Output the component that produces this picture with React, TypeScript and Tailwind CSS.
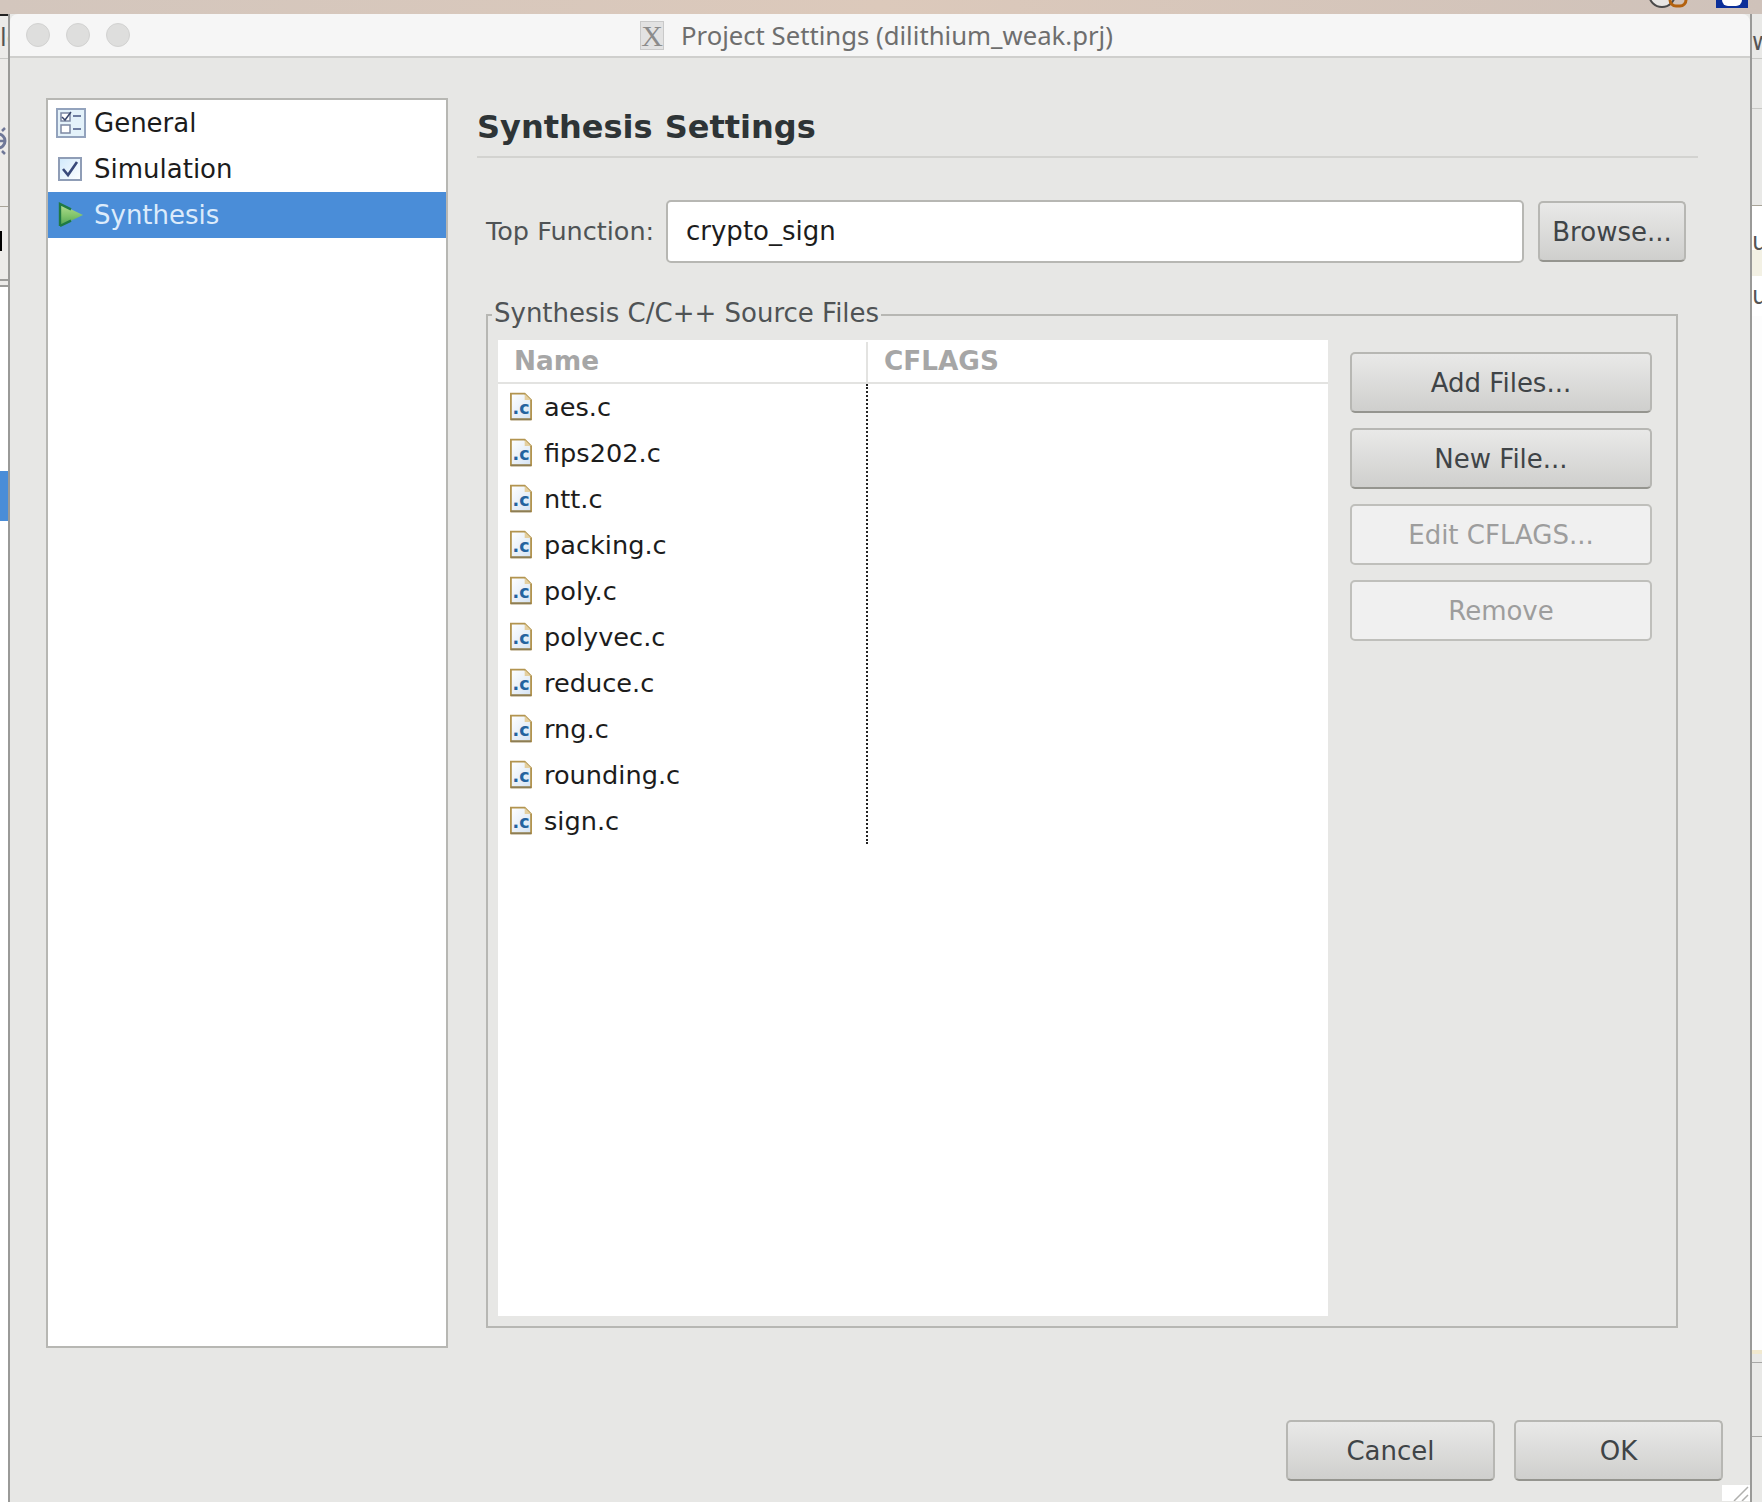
const files = ['aes.c', 'fips202.c', 'ntt.c', 'packing.c', 'poly.c', 'polyvec.c', 'reduce.c', 'rng.c', 'rounding.c', 'sign.c'];

const FileIcon = () => (
  <svg width="22" height="29" viewBox="0 0 24 30" className="shrink-0 mb-[2px]">
    <defs>
      <linearGradient id="fileFill" x1="0" y1="0" x2="1" y2="1">
        <stop offset="0" stopColor="#ffffff" />
        <stop offset="1" stopColor="#d5e3f3" />
      </linearGradient>
    </defs>
    <path d="M1 1 H16 L23 8 V29 H1 Z" fill="url(#fileFill)" stroke="#b2944f" strokeWidth="2" />
    <path d="M1 29 H23" stroke="#8c7d55" strokeWidth="2" />
    <path d="M16 1 V8 H23 Z" fill="#e4cf9f" />
    <text x="12" y="23" textAnchor="middle" fontSize="19" fontWeight="700" fontFamily="DejaVu Sans, sans-serif" fill="#24629f">.c</text>
  </svg>
);

const GeneralIcon = () => (
  <svg width="30" height="30" viewBox="0 0 30 30" className="shrink-0">
    <rect x="1" y="1" width="28" height="28" fill="#e4f2fa" stroke="#93a3bd" strokeWidth="2" />
    <rect x="5" y="5" width="9" height="8" fill="#ffffff" stroke="#7c88a3" strokeWidth="1.5" />
    <path d="M6 9 L9 12 L15 4" fill="none" stroke="#39466b" strokeWidth="1.5" />
    <path d="M17 8 H25" stroke="#6e7da0" strokeWidth="2" />
    <rect x="5" y="17" width="9" height="8" fill="#ffffff" stroke="#7c88a3" strokeWidth="1.5" />
    <path d="M17 21 H25" stroke="#6e7da0" strokeWidth="2" />
  </svg>
);

const CheckIcon = () => (
  <svg width="30" height="30" viewBox="0 0 30 30" className="shrink-0">
    <defs>
      <linearGradient id="checkFill" x1="0" y1="0" x2="1" y2="1">
        <stop offset="0" stopColor="#cfe8fb" />
        <stop offset="1" stopColor="#ffffff" />
      </linearGradient>
    </defs>
    <rect x="3" y="4" width="22" height="22" fill="url(#checkFill)" stroke="#8f9db6" strokeWidth="2" />
    <path d="M7 15 L12 21 L21 8" fill="none" stroke="#39497a" strokeWidth="2.6" />
  </svg>
);

const PlayIcon = () => (
  <svg width="30" height="30" viewBox="0 0 30 30" className="shrink-0">
    <defs>
      <linearGradient id="playFill" x1="0" y1="0" x2="0" y2="1">
        <stop offset="0" stopColor="#b4dd8f" />
        <stop offset="0.55" stopColor="#7fc36a" />
        <stop offset="1" stopColor="#4f9f55" />
      </linearGradient>
    </defs>
    <path d="M4 4 L27 15 L4 26 Z" fill="url(#playFill)" />
    <path d="M4 26 V4 L15 9.3 M4 26 L15 20.7" fill="none" stroke="#1f7a43" strokeWidth="2.4" />
  </svg>
);

const XIcon = () => (
  <div className="w-[24px] h-[29px] bg-[#e2e2e2] border border-[#c9c9c9] flex items-center justify-center text-[30px] leading-none text-[#8b8b8b] font-['Liberation_Serif',serif]">
    X
  </div>
);

const Light = () => <div className="w-[24px] h-[24px] rounded-full bg-[#dededd] border border-[#d2d2d1]" />;

const SideItem = ({ icon, label, active }: { icon: React.ReactNode; label: string; active?: boolean }) => (
  <div className={`h-[46px] flex items-center pl-[8px] gap-[8px] text-[26px] ${active ? 'bg-[#4a8dd8] text-[#dcebfb]' : 'text-[#1c1c1c]'}`}>
    {icon}
    <span>{label}</span>
  </div>
);

const Btn = ({ label, disabled, className = '' }: { label: string; disabled?: boolean; className?: string }) => (
  <button
    className={`h-[61px] rounded-[5px] border-2 pt-[2px] flex items-center justify-center text-[26px] ${
      disabled
        ? 'border-[#bfbfbb] bg-[#f0f0f0] text-[#9d9d9d]'
        : 'border-[#b7b7b3] border-b-[#95958f] bg-gradient-to-b from-[#e9e9e8] to-[#cfcfcd] text-[#3f4447]'
    } ${className}`}
  >
    {label}
  </button>
);

export default function App() {
  return (
    <div className="w-[1762px] h-[1502px] overflow-hidden flex flex-col bg-[#e7e7e5] font-['DejaVu_Sans',sans-serif]">
      {/* desktop strip above the dialog */}
      <div className="h-[14px] shrink-0 bg-gradient-to-r from-[#d3c6bd] via-[#dcc9bb] to-[#cfc2ba] flex justify-end overflow-hidden">
        <svg width="46" height="8" viewBox="0 0 46 8" className="mr-[24px]">
          <circle cx="16" cy="-6" r="13" fill="#e8e6e4" stroke="#4a4a4a" strokeWidth="2" />
          <rect x="24" y="-12" width="16" height="18" rx="6" fill="none" stroke="#b3620f" strokeWidth="3" />
        </svg>
        <div className="w-[32px] h-[8px] bg-[#0b2f99] mr-[14px] flex justify-center">
          <div className="w-[20px] h-[6px] bg-white rounded-b-full" />
        </div>
      </div>

      <div className="flex-1 flex min-h-0">
        {/* window behind, left edge */}
        <div className="w-[10px] shrink-0 flex flex-col bg-[#ecebe9] border-r-2 border-[#9a9a98] overflow-hidden text-[24px] leading-none">
          <div className="h-[2px] bg-[#222]" />
          <div className="h-[42px] text-[#555] pt-[10px] whitespace-nowrap">lc</div>
          <div className="h-[1px] bg-[#c9c9c6]" />
          <div className="h-[147px] pt-[68px]">
            <svg width="8" height="28" viewBox="0 0 8 28">
              <circle cx="-2" cy="14" r="7" fill="none" stroke="#6f7898" strokeWidth="3" />
              <path d="M-2 0 V28 M-2 14 H6 M2 4 L5 1 M2 24 L5 27" stroke="#6f7898" strokeWidth="2.5" />
            </svg>
          </div>
          <div className="h-[1px] bg-[#a8a498]" />
          <div className="h-[24px]" />
          <div className="h-[20px] w-[2px] bg-black" />
          <div className="h-[28px]" />
          <div className="h-[2px] bg-[#9c9c9a]" />
          <div className="h-[4px]" />
          <div className="h-[2px] bg-[#9c9c9a]" />
          <div className="flex-1 bg-white">
            <div className="h-[184px]" />
            <div className="h-[50px] bg-[#4a8dd8]" />
          </div>
        </div>

        {/* dialog */}
        <div className="flex-1 flex flex-col min-w-0 rounded-t-[8px] overflow-hidden bg-[#e7e7e5]">
          <div className="h-[44px] shrink-0 bg-[#f6f6f6] border-b-2 border-[#cfcfcd] flex items-center relative">
            <div className="flex gap-[16px] pl-[16px]">
              <Light />
              <Light />
              <Light />
            </div>
            <div className="absolute left-[630px] top-[6px] flex items-center gap-[17px]">
              <XIcon />
              <span className="text-[25.7px] leading-[30px] mt-[1px] text-[#6e6e6e] font-['Noto_Sans',sans-serif] whitespace-nowrap">Project Settings (dilithium_weak.prj)</span>
            </div>
          </div>

          <div className="flex-1 flex min-h-0 pl-[36px]">
            {/* sidebar list */}
            <div className="w-[402px] h-[1250px] mt-[40px] shrink-0 bg-white border-2 border-[#b7b7b3]">
              <SideItem icon={<GeneralIcon />} label="General" />
              <SideItem icon={<CheckIcon />} label="Simulation" />
              <SideItem icon={<PlayIcon />} label="Synthesis" active />
            </div>

            <div className="flex-1 flex flex-col min-w-0 pl-[29px] pr-[52px]">
              <h2 className="h-[58px] mt-[42px] text-[32px] leading-[54px] font-bold text-[#2e3436] [word-spacing:1px] border-b-2 border-[#d3d3d0] shrink-0">Synthesis Settings</h2>

              <div className="flex items-center mt-[42px] pl-[9px] shrink-0">
                <span className="text-[25.5px] text-[#4f5355] w-[180px] whitespace-nowrap">Top Function:</span>
                <div className="w-[858px] h-[63px] bg-white border-2 border-[#b7b7b3] rounded-[5px] flex items-center pl-[18px] text-[26px] text-[#1c1c1c]">crypto_sign</div>
                <Btn label="Browse..." className="w-[148px] ml-[14px]" />
              </div>

              {/* group box */}
              <div className="relative mt-[51px] ml-[9px] w-[1192px] h-[1014px] shrink-0 border-2 border-[#b7b7b3] flex pl-[10px] pt-[24px]">
                <span className="absolute left-[4px] -top-[19px] bg-[#e7e7e5] px-[2px] text-[26px] leading-[32px] text-[#4f5355] whitespace-nowrap">Synthesis C/C++ Source Files</span>

                <div className="w-[830px] h-[976px] bg-white flex flex-col shrink-0">
                  <div className="h-[44px] pt-[2px] flex shrink-0 border-b-2 border-[#e3e3e1] text-[26.3px] font-bold text-[#a6a6a6]">
                    <div className="w-[370px] pl-[16px] border-r-2 border-[#e3e3e1] flex items-center">Name</div>
                    <div className="pl-[16px] flex items-center">CFLAGS</div>
                  </div>
                  <div className="w-[370px] border-r-2 border-dotted border-[#222]">
                    {files.map((name) => (
                      <div key={name} className="h-[46px] flex items-center pl-[12px] gap-[12px] text-[25.6px] text-[#1c1c1c]">
                        <FileIcon />
                        <span>{name}</span>
                      </div>
                    ))}
                  </div>
                </div>

                <div className="w-[302px] ml-[22px] mt-[12px] flex flex-col gap-[15px]">
                  <Btn label="Add Files..." />
                  <Btn label="New File..." />
                  <Btn label="Edit CFLAGS..." disabled />
                  <Btn label="Remove" disabled />
                </div>
              </div>

              <div className="flex justify-end gap-[19px] mt-[92px] -mr-[25px] shrink-0">
                <Btn label="Cancel" className="w-[209px]" />
                <Btn label="OK" className="w-[209px]" />
              </div>

              {/* resize grip */}
              <div className="self-end -mr-[52px] mt-[4px] w-[28px] h-[16px] bg-white flex justify-end">
                <svg width="18" height="16" viewBox="0 0 18 16">
                  <path d="M2 16 L16 2 M10 16 L16 10" stroke="#b0b0ae" strokeWidth="1.5" />
                </svg>
              </div>
            </div>
          </div>
        </div>

        {/* window behind, right edge */}
        <div className="w-[12px] shrink-0 flex flex-col bg-[#e9e9e7] border-l-2 border-[#9a9a98] overflow-hidden text-[24px] leading-none text-[#555]">
          <div className="h-[44px] pt-[16px]">w</div>
          <div className="h-[1px] bg-[#c9c9c6]" />
          <div className="h-[49px]" />
          <div className="h-[1px] bg-[#c9c9c6]" />
          <div className="h-[96px]" />
          <div className="h-[1px] bg-[#a8a498]" />
          <div className="h-[70px] bg-white">
            <div className="h-[24px]" />
            <div className="h-[20px]">u</div>
            <div className="h-[26px] bg-[#f3f1e4]" />
          </div>
          <div className="h-[40px] bg-white pt-[8px]">u</div>
          <div className="h-[1034px] bg-[#fdfdfd]" />
          <div className="h-[4px] bg-[#f1e9cf]" />
          <div className="h-[8px]" />
          <div className="h-[1px] bg-[#a8a8a6]" />
          <div className="h-[73px]" />
          <div className="h-[1px] bg-[#a8a8a6]" />
          <div className="flex-1" />
        </div>
      </div>
    </div>
  );
}
